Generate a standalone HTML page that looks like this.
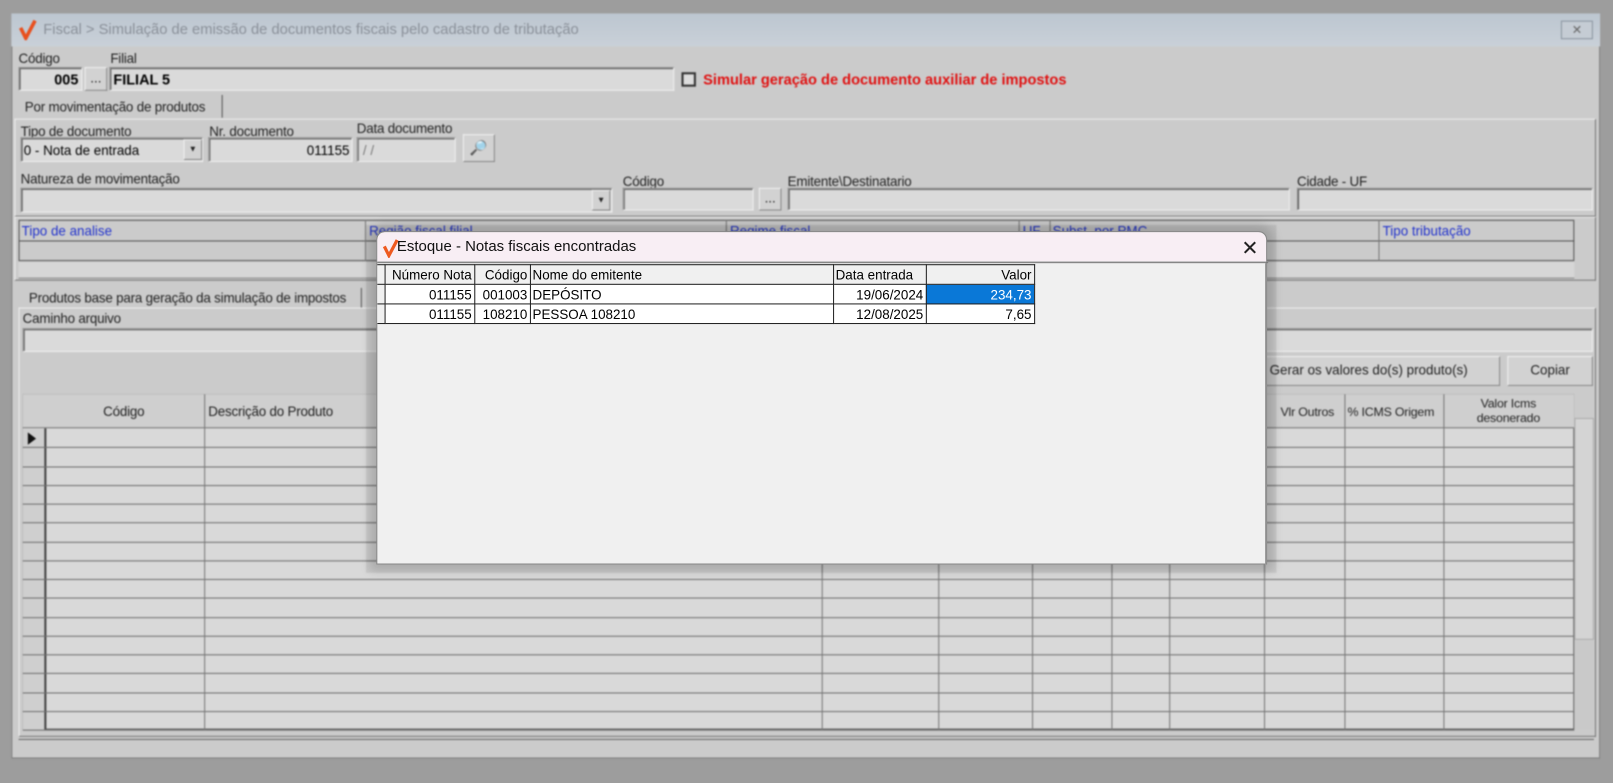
<!DOCTYPE html>
<html><head><meta charset="utf-8"><style>
*{box-sizing:border-box;margin:0;padding:0}
html,body{width:1613px;height:783px;overflow:hidden;background:#9d9d9d;font-family:"Liberation Sans",sans-serif}
#wrap{position:absolute;left:0;top:0;width:1565px;height:758px;transform:scale(1.031,1.032);transform-origin:0 0}
.a{position:absolute}
#main{position:absolute;left:0;top:0;width:1565px;height:758px;filter:blur(0.7px)}
.win{left:11px;top:13px;width:1541px;height:722px;background:#cbcbcb;border:1px solid #7d7d7d}
.tb{left:11px;top:13px;width:1541px;height:32px;background:linear-gradient(#bcc6d0,#c9d0d8)}
.lbl{font-size:13px;color:#222;letter-spacing:-0.2px}
.inp{background:#dadada;border:1px solid #8a8a8a;border-right-color:#eee;border-bottom-color:#eee;box-shadow:inset 1px 1px 0 #555}
.btn{background:#d2d2d2;border:1px solid #888;border-top-color:#f0f0f0;border-left-color:#f0f0f0;font-size:13px;text-align:center;color:#222}
.blue{color:#2233cc;font-size:13px}
.vl{position:absolute;width:1px;background:#777}
.hl{position:absolute;height:1px;background:#777}
#dlg{position:absolute;left:365px;top:224px;width:864px;height:323px;background:#f0f0f0;border:1px solid #888;border-radius:8px 8px 0 0;box-shadow:0 0 10px 6px rgba(0,0,0,.15)}
#dlg .tt{position:absolute;left:0;top:0;width:862px;height:29px;background:#f8eef4;border-radius:8px 8px 0 0;border-bottom:1px solid #bbb}
table{border-collapse:collapse;font-size:13px;font-family:"Liberation Sans",sans-serif}
td{border:1px solid #222;height:19px;padding:0 2px;white-space:nowrap}
</style></head><body><div id="wrap">
<div id="main">
<div class="a win"></div>
<div class="a tb"></div>
<svg class="a" style="left:18px;top:19px" width="18" height="20" viewBox="0 0 18 20"><path d="M2 8 L7 18 L16 1" stroke="#e8501e" stroke-width="3.5" fill="none"/></svg>
<div class="a" style="left:42px;top:21px;font-size:14.3px;color:#8a9099">Fiscal &gt; Simulação de emissão de documentos fiscais pelo cadastro de tributação</div>
<div class="a btn" style="left:1514px;top:20px;width:31px;height:18px;background:#c5ccd4;border-color:#8a95a0;font-size:12px;color:#666;line-height:16px">✕</div>

<div class="a lbl" style="left:18px;top:49px">Código</div>
<div class="a lbl" style="left:107px;top:49px">Filial</div>
<div class="a inp" style="left:18px;top:65px;width:62px;height:23px;font-weight:bold;font-size:14px;text-align:right;padding:3px 3px">005</div>
<div class="a btn" style="left:82px;top:65px;width:22px;height:23px;line-height:20px">...</div>
<div class="a inp" style="left:106px;top:65px;width:548px;height:23px;font-weight:bold;font-size:14px;padding:3px 3px">FILIAL 5</div>
<div class="a" style="left:661px;top:70px;width:14px;height:14px;border:2px solid #333;background:#ddd"></div>
<div class="a" style="left:682px;top:70px;color:#e01010;font-weight:bold;font-size:14.2px">Simular geração de documento auxiliar de impostos</div>

<div class="a lbl" style="left:24px;top:96px;font-size:13px">Por movimentação de produtos</div>
<div class="vl" style="left:215px;top:92px;height:22px;background:#555"></div>
<div class="a" style="left:14px;top:115px;width:1534px;height:95px;border:1px solid #eee;border-right-color:#777;border-bottom-color:#777"></div>
<div class="a lbl" style="left:20px;top:120px">Tipo de documento</div>
<div class="a inp" style="left:20px;top:133px;width:177px;height:24px;font-size:13px;padding:4px 2px">0 - Nota de entrada</div>
<div class="a btn" style="left:178px;top:135px;width:18px;height:20px;font-size:8px;line-height:18px">▼</div>
<div class="a lbl" style="left:203px;top:120px">Nr. documento</div>
<div class="a inp" style="left:202px;top:133px;width:140px;height:24px;font-size:13px;text-align:right;padding:4px 2px">011155</div>
<div class="a lbl" style="left:346px;top:117px">Data documento</div>
<div class="a inp" style="left:346px;top:133px;width:96px;height:24px;font-size:13px;padding:4px 5px;color:#777">/ /</div>
<div class="a btn" style="left:449px;top:130px;width:31px;height:27px;font-size:14px;line-height:24px;color:#246">🔎</div>
<div class="a lbl" style="left:20px;top:166px">Natureza de movimentação</div>
<div class="a inp" style="left:20px;top:182px;width:574px;height:24px"></div>
<div class="a btn" style="left:574px;top:184px;width:18px;height:20px;font-size:8px;line-height:18px">▼</div>
<div class="a lbl" style="left:604px;top:168px">Código</div>
<div class="a inp" style="left:604px;top:182px;width:127px;height:22px"></div>
<div class="a btn" style="left:736px;top:182px;width:22px;height:22px;line-height:18px">...</div>
<div class="a lbl" style="left:764px;top:168px">Emitente\Destinatario</div>
<div class="a inp" style="left:764px;top:182px;width:487px;height:22px"></div>
<div class="a lbl" style="left:1258px;top:168px">Cidade - UF</div>
<div class="a inp" style="left:1258px;top:182px;width:287px;height:22px"></div>

<div class="a" style="left:14px;top:210px;width:1534px;height:62px;border:1px solid #eee;border-right-color:#777;border-bottom-color:#777"></div>
<div class="a" style="left:18px;top:213px;width:1509px;height:40px;border:1px solid #555"></div>
<div class="hl" style="left:18px;top:233px;width:1509px;background:#555"></div>
<div class="a" style="left:18px;top:254px;width:1509px;height:16px;background:#d6d6d6;border-bottom:1px solid #888"></div>
<div class="vl" style="left:354px;top:213px;height:40px"></div>
<div class="vl" style="left:704px;top:213px;height:40px"></div>
<div class="vl" style="left:988px;top:213px;height:40px"></div>
<div class="vl" style="left:1018px;top:213px;height:40px"></div>
<div class="vl" style="left:1337px;top:213px;height:40px"></div>
<div class="a blue" style="left:21px;top:216px">Tipo de analise</div>
<div class="a blue" style="left:358px;top:216px">Região fiscal filial</div>
<div class="a blue" style="left:708px;top:216px">Regime fiscal</div>
<div class="a blue" style="left:992px;top:216px">UF</div>
<div class="a blue" style="left:1021px;top:216px">Subst. por PMC</div>
<div class="a blue" style="left:1341px;top:216px">Tipo tributação</div>

<div class="a lbl" style="left:28px;top:281px;font-size:13px">Produtos base para geração da simulação de impostos</div>
<div class="vl" style="left:350px;top:279px;height:20px;background:#555"></div>
<div class="a" style="left:18px;top:298px;width:1530px;height:416px;border:1px solid #eee;border-right-color:#777;border-bottom-color:#777"></div>
<div class="a lbl" style="left:22px;top:301px">Caminho arquivo</div>
<div class="a inp" style="left:22px;top:318px;width:1523px;height:23px"></div>
<div class="a btn" style="left:1200px;top:345px;width:255px;height:29px;line-height:26px">Gerar os valores do(s) produto(s)</div>
<div class="a btn" style="left:1462px;top:345px;width:83px;height:29px;line-height:26px">Copiar</div>

<div class="a" style="left:22px;top:382px;width:1505px;height:325px;background:#d9d9d9;border:1px solid #555"></div>
<div class="a" style="left:22px;top:382px;width:1505px;height:33px;background:#cfcfcf;border-bottom:1px solid #777"></div>
<div class="a" style="left:22px;top:415px;width:23px;height:292px;background:#cfcfcf;border-right:2px solid #444"></div>
<div id="rows"></div>
<div class="vl" style="left:198px;top:382px;height:325px"></div>
<div class="vl" style="left:797px;top:382px;height:325px"></div>
<div class="vl" style="left:910px;top:382px;height:325px"></div>
<div class="vl" style="left:1001px;top:382px;height:325px"></div>
<div class="vl" style="left:1078px;top:382px;height:325px"></div>
<div class="vl" style="left:1134px;top:382px;height:325px"></div>
<div class="vl" style="left:1226px;top:382px;height:325px"></div>
<div class="vl" style="left:1304px;top:382px;height:325px"></div>
<div class="vl" style="left:1400px;top:382px;height:325px"></div>
<div class="a lbl" style="left:100px;top:391px">Código</div>
<div class="a lbl" style="left:202px;top:391px">Descrição do Produto</div>
<div class="a lbl" style="left:1242px;top:392px;font-size:12px">Vlr Outros</div>
<div class="a lbl" style="left:1307px;top:392px;font-size:12px">% ICMS Origem</div>
<div class="a lbl" style="left:1400px;top:384px;width:126px;text-align:center;font-size:12px;line-height:14px">Valor Icms<br>desonerado</div>
<div class="a" style="left:27px;top:419px;width:0;height:0;border-left:8px solid #111;border-top:6px solid transparent;border-bottom:6px solid transparent"></div>
<div class="a" style="left:1527px;top:405px;width:19px;height:215px;background:#d4d4d4;border:1px solid #aaa"></div>
<div class="a" style="left:1527px;top:620px;width:19px;height:87px;background:#c9c9c9"></div>
<div class="hl" style="left:18px;top:716px;width:1528px;background:#666"></div>
<div class="a" style="left:355px;top:218px;width:883px;height:337px;background:rgba(0,0,0,.08)"></div>
</div>

<div id="dlg">
<div class="tt"></div>
<svg class="a" style="left:5px;top:6px" width="16" height="19" viewBox="0 0 18 20"><path d="M2 8 L7 18 L16 1" stroke="#ee5a20" stroke-width="3.5" fill="none"/></svg>
<div class="a" style="left:19px;top:6px;font-size:14.5px;color:#111">Estoque - Notas fiscais encontradas</div>
<div class="a" style="left:838px;top:3px;font-size:20px;color:#222;font-weight:300">✕</div>
<div class="a" style="left:0;top:29px;width:864px;height:1px;background:#777"></div>
<table class="a" style="left:0;top:31px">
<tr style="background:#f0f0f0"><td style="width:7px;border-left:none"></td><td style="width:87px;text-align:right">Número Nota</td><td style="width:54px;text-align:right">Código</td><td style="width:294px">Nome do emitente</td><td style="width:90px">Data entrada</td><td style="width:105px;text-align:right">Valor</td></tr>
<tr style="background:#fff"><td style="border-left:none;background:#f0f0f0"></td><td style="text-align:right">011155</td><td style="text-align:right">001003</td><td>DEPÓSITO</td><td style="text-align:right">19/06/2024</td><td style="text-align:right;background:#0a78d7;color:#fff">234,73</td></tr>
<tr style="background:#fff"><td style="border-left:none;background:#f0f0f0"></td><td style="text-align:right">011155</td><td style="text-align:right">108210</td><td>PESSOA 108210</td><td style="text-align:right">12/08/2025</td><td style="text-align:right">7,65</td></tr>
</table>
<div class="a" style="left:861px;top:30px;width:1px;height:292px;background:#999"></div>
</div>
</div>
<script>
var r=document.getElementById('rows'),h='';
for(var i=1;i<=16;i++){var y=415+i*18.25;h+='<div class="hl" style="left:22px;top:'+y.toFixed(1)+'px;width:1505px;background:#6f6f6f"></div>';}
r.innerHTML=h;
</script>
</body></html>
